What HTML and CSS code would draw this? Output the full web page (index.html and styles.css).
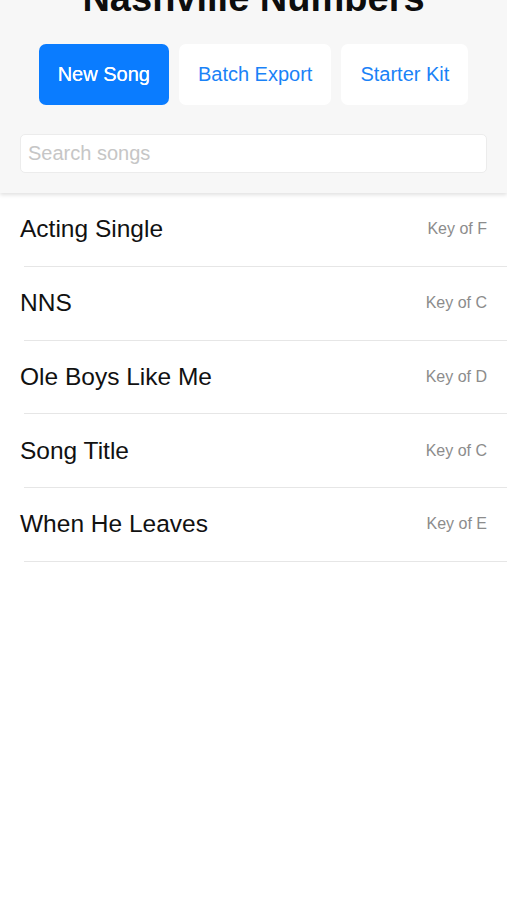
FILE: index.html
```html
<!DOCTYPE html>
<html lang="en">
<head>
    <meta charset="UTF-8">
    <meta name="viewport" content="width=device-width, initial-scale=1.0">
    <title>Nashville Numbers</title>
    <link rel="stylesheet" href="styles.css">
</head>
<body>

    <div class="header">
        <h1>Nashville Numbers</h1>

        <div class="button-row">
            <button class="btn primary">New Song</button>
            <button class="btn">Batch Export</button>
            <button class="btn">Starter Kit</button>
        </div>

        <input type="text" class="search" placeholder="Search songs">
    </div>

    <ul class="song-list">
        <li>
            <div class="song-row">
                <span class="song-title">Acting Single</span>
                <span class="song-key">Key of F</span>
            </div>
        </li>
        <li>
            <div class="song-row">
                <span class="song-title">NNS</span>
                <span class="song-key">Key of C</span>
            </div>
        </li>
        <li>
            <div class="song-row">
                <span class="song-title">Ole Boys Like Me</span>
                <span class="song-key">Key of D</span>
            </div>
        </li>
        <li>
            <div class="song-row">
                <span class="song-title">Song Title</span>
                <span class="song-key">Key of C</span>
            </div>
        </li>
        <li>
            <div class="song-row">
                <span class="song-title">When He Leaves</span>
                <span class="song-key">Key of E</span>
            </div>
        </li>
    </ul>

</body>
</html>
```

FILE: styles.css
```css
body {
    margin: 0;
    padding: 0;
    background-color: #fff;
    font-family: "Liberation Sans", Arial, sans-serif;
    overflow: hidden;
}

.header {
    background-color: #f7f7f7;
    padding: 0 20px 20px 20px;
    box-shadow: 0 2px 4px rgba(0, 0, 0, 0.12);
    position: relative;
    z-index: 1;
}

/* title is scrolled up under the status area, so only its lower half shows */
h1 {
    margin: -21px 0 0 0;
    text-align: center;
    font-size: 38px;
    line-height: 38px;
    font-weight: bold;
    color: #0d0d0d;
}

.button-row {
    display: flex;
    justify-content: center;
    gap: 10px;
    margin-top: 27px;
}

.btn {
    height: 61px;
    padding: 0 19px;
    border: 0;
    border-radius: 7px;
    background-color: #fff;
    color: #1a82f7;
    font-family: "Liberation Sans", Arial, sans-serif;
    font-size: 20px;
}

.btn.primary {
    background-color: #0a7cff;
    color: #fff;
    text-shadow: 0 0 0.4px #fff;
}

.search {
    display: block;
    box-sizing: border-box;
    width: 100%;
    height: 39px;
    margin-top: 29px;
    padding: 0 7px;
    border: 1px solid #ececec;
    border-radius: 5px;
    background-color: #fff;
    font-family: "Liberation Sans", Arial, sans-serif;
    font-size: 20px;
    color: #222;
}

.search::placeholder {
    color: #c6c6c6;
}

.song-list {
    list-style: none;
    margin: 0;
    padding: 0;
}

.song-list li::after {
    content: "";
    display: block;
    height: 1px;
    margin-left: 24px;
    background-color: #e6e6e6;
}

.song-row {
    height: 72.75px;
    padding: 0 20px;
    display: flex;
    align-items: center;
    justify-content: space-between;
}

.song-title {
    font-size: 24.5px;
    color: #111;
}

.song-key {
    font-size: 16px;
    color: #8c8c8c;
}
```
